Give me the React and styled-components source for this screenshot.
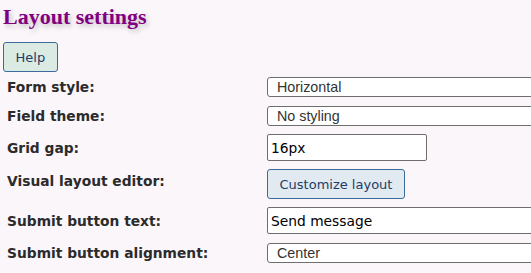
import React from "react";
import styled, { createGlobalStyle } from "styled-components";

const Global = createGlobalStyle`
  html, body {
    margin: 0;
    padding: 0;
    background: #fbf6fa;
    overflow: hidden;
  }
  body {
    font-family: "DejaVu Sans", Verdana, sans-serif;
  }
`;

const Page = styled.div`
  padding: 4px 0 0 3px;
  width: 528px;
  overflow: hidden;
`;

const Title = styled.h1`
  margin: 0;
  font-family: "Liberation Serif", "Times New Roman", serif;
  font-weight: bold;
  font-size: 22px;
  line-height: 26px;
  color: #800080;
  text-shadow: 2px 3px 5px rgba(0, 0, 0, 0.22);
`;

const Button = styled.button`
  box-sizing: border-box;
  height: 30px;
  padding: 0 11.5px;
  border: 1px solid #3a6b9c;
  border-radius: 3px;
  background: ${(p) => (p.$variant === "help" ? "#dbebe4" : "#e1e9f1")};
  color: #1c3d66;
  font-family: "DejaVu Sans", Verdana, sans-serif;
  font-size: 13px;
  line-height: 1;
  cursor: pointer;
`;

const HelpRow = styled.div`
  margin-top: 12px;
`;

const Form = styled.div`
  display: grid;
  grid-template-columns: 264px 300px;
  row-gap: 8px;
  align-items: center;
  margin-top: 4px;
`;

const Label = styled.label`
  padding-left: 4px;
  padding-bottom: ${(p) => p.$lift || 0}px;
  font-family: "DejaVu Sans", Verdana, sans-serif;
  font-weight: bold;
  font-size: 13.8px;
  color: #2b2b2b;
  white-space: nowrap;
`;

const Select = styled.select`
  appearance: none;
  -webkit-appearance: none;
  box-sizing: border-box;
  width: 300px;
  height: 20px;
  margin-top: 1px;
  padding: 0 0 0 9px;
  border: 1px solid #6e6e6e;
  border-radius: 3px;
  background: #ffffff;
  color: #333333;
  font-family: "Liberation Sans", Arial, sans-serif;
  font-size: 14.3px;
  line-height: 18px;
`;

const Input = styled.input`
  box-sizing: border-box;
  width: ${(p) => p.$width}px;
  height: 27px;
  padding: 0 0 0 3px;
  border: 1px solid #6e6e6e;
  border-radius: 2px;
  background: #ffffff;
  color: #000000;
  font-family: "DejaVu Sans", Verdana, sans-serif;
  font-size: 13.8px;
`;

const Cell = styled.div`
  display: flex;
  align-items: center;
`;

export default function App() {
  return (
    <>
      <Global />
      <Page>
        <Title>Layout settings</Title>
        <HelpRow>
          <Button $variant="help">Help</Button>
        </HelpRow>
        <Form>
          <Label>Form style:</Label>
          <Cell>
            <Select defaultValue="horizontal">
              <option value="horizontal">Horizontal</option>
              <option value="vertical">Vertical</option>
            </Select>
          </Cell>

          <Label>Field theme:</Label>
          <Cell>
            <Select defaultValue="none">
              <option value="none">No styling</option>
            </Select>
          </Cell>

          <Label>Grid gap:</Label>
          <Cell>
            <Input $width={160} defaultValue="16px" />
          </Cell>

          <Label $lift={7}>Visual layout editor:</Label>
          <Cell>
            <Button $variant="custom">Customize layout</Button>
          </Cell>

          <Label>Submit button text:</Label>
          <Cell>
            <Input $width={300} defaultValue="Send message" />
          </Cell>

          <Label>Submit button alignment:</Label>
          <Cell>
            <Select defaultValue="center">
              <option value="center">Center</option>
            </Select>
          </Cell>
        </Form>
      </Page>
    </>
  );
}
